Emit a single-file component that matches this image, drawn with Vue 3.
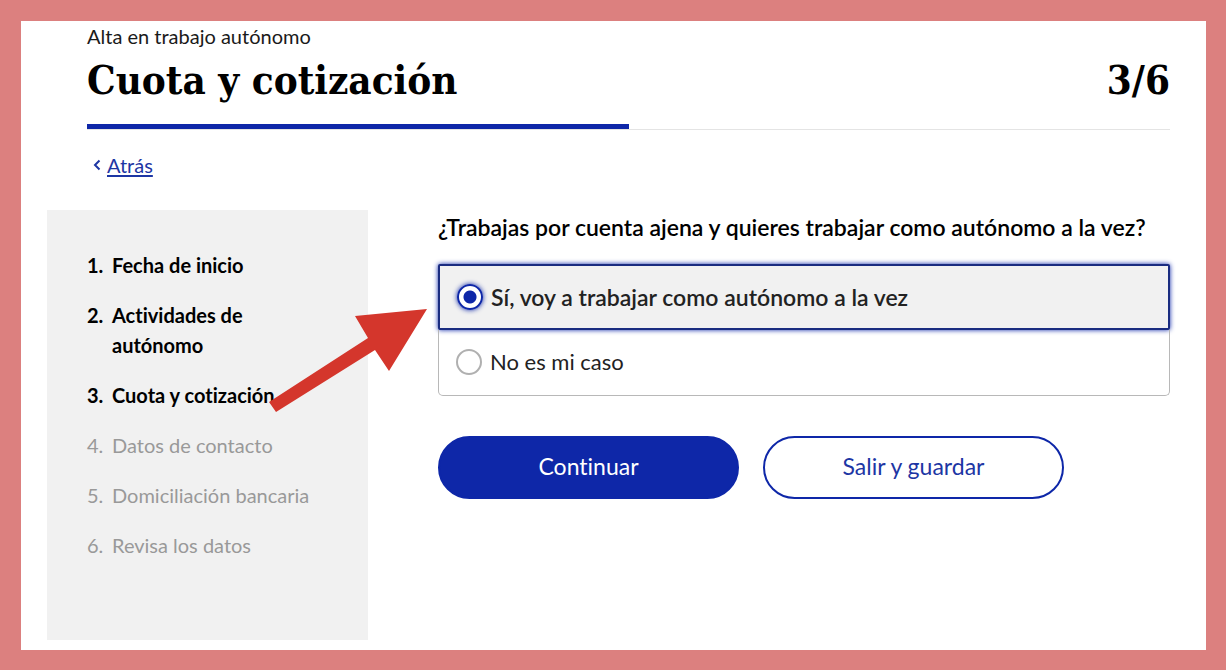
<template>
  <div class="page">
    <header class="header">
      <p class="overline">Alta en trabajo autónomo</p>
      <div class="title-row">
        <h1 class="title">Cuota y cotización</h1>
        <span class="counter">{{ currentStep }}/{{ steps.length }}</span>
      </div>
      <div class="progress">
        <div class="progress-bar" :style="{ width: progress + '%' }"></div>
      </div>
      <nav class="back">
        <svg class="back-icon" viewBox="0 0 8 12" aria-hidden="true">
          <path d="M6.5 1.500 2 6l4.500 4.500" />
        </svg>
        <a href="#" class="back-link">Atrás</a>
      </nav>
    </header>

    <div class="content">
      <aside class="sidebar">
        <ol class="steps">
          <li
            v-for="(step, index) in steps"
            :key="step"
            class="step"
            :class="{ active: index < currentStep }"
          >
            <span>{{ index + 1 }}.</span>
            <span>{{ step }}</span>
          </li>
        </ol>
      </aside>

      <form class="form" @submit.prevent>
        <h2 id="question" class="question">
          ¿Trabajas por cuenta ajena y quieres trabajar como autónomo a la vez?
        </h2>

        <div class="options" role="radiogroup" aria-labelledby="question">
          <label
            v-for="option in options"
            :key="option.value"
            class="option"
            :class="{ selected: selected === option.value }"
          >
            <input
              v-model="selected"
              type="radio"
              name="situation"
              :value="option.value"
              class="radio"
            />
            <span>{{ option.label }}</span>
          </label>

          <!-- Flecha que señala la opción -->
          <svg class="arrow" viewBox="0 0 158 103" aria-hidden="true">
            <polygon points="158,0 86,7 99,29 0,93 7,103 106,41 120,62" />
          </svg>
        </div>

        <div class="actions">
          <button type="submit" class="btn btn-primary">Continuar</button>
          <button type="button" class="btn btn-outline">Salir y guardar</button>
        </div>
      </form>
    </div>
  </div>
</template>

<script setup>
import { ref, computed } from 'vue'

const steps = [
  'Fecha de inicio',
  'Actividades de autónomo',
  'Cuota y cotización',
  'Datos de contacto',
  'Domiciliación bancaria',
  'Revisa los datos'
]

const options = [
  { value: 'yes', label: 'Sí, voy a trabajar como autónomo a la vez' },
  { value: 'no', label: 'No es mi caso' }
]

const currentStep = ref(3)
const selected = ref('yes')

const progress = computed(() => (currentStep.value / steps.length) * 100)
</script>

<style>
body {
  margin: 0;
}
</style>

<style scoped>
.page {
  box-sizing: border-box;
  min-height: 100vh;
  display: flex;
  flex-direction: column;
  border: 20px solid #dc807f;
  border-top-width: 21px;
  border-left-width: 21px;
  background: #ffffff;
  color: #000000;
  font-family: Lato, "Open Sans", sans-serif;
  font-size: 20px;
  font-variant-ligatures: none;
  line-height: 30px;
}

.header {
  padding: 0 36px 0 66px;
}

.overline {
  margin: 0;
  color: #1a1a1a;
}

.title-row {
  display: flex;
  align-items: center;
  justify-content: space-between;
  padding: 3px 0 18px;
}

.title,
.counter {
  margin: 0;
  font-family: "DejaVu Serif Condensed", "DejaVu Serif", serif;
  font-size: 40px;
  font-weight: 700;
  line-height: 52px;
}

.progress {
  border-bottom: 1px solid #e4e4e4;
}

.progress-bar {
  height: 5px;
  background: #0e27a8;
}

.back {
  display: flex;
  align-items: center;
  gap: 6px;
  padding: 20px 0 30px 6px;
}

.back-icon {
  width: 8px;
  height: 12px;
  fill: none;
  stroke: #1d36a4;
  stroke-width: 2;
}

.back-link {
  color: #1d36a4;
  text-underline-offset: 2px;
}

.content {
  flex: 1;
  display: grid;
  grid-template-columns: 321px 1fr;
  column-gap: 70px;
  padding: 0 36px 10px 26px;
}

.sidebar {
  padding: 40px;
  background: #f1f1f1;
}

.steps {
  display: flex;
  flex-direction: column;
  gap: 20px;
  margin: 0;
  padding: 0;
  list-style: none;
}

.step {
  display: grid;
  grid-template-columns: 25px 1fr;
  color: #999999;
}

.step.active {
  color: #000000;
  font-weight: 700;
}

.question {
  margin: 0 0 20px;
  font-size: 23px;
  font-weight: 600;
  line-height: 34px;
}

.options {
  position: relative;
  margin-bottom: 40px;
}

.option {
  display: flex;
  align-items: center;
  gap: 8px;
  box-sizing: border-box;
  height: 66px;
  padding: 0 17px 2px;
  border: 1px solid #b8b8b8;
  border-top: 0;
  border-radius: 0 0 5px 5px;
  color: #222222;
  font-size: 22px;
  cursor: pointer;
}

.option.selected {
  padding: 0 17px;
  border: 2px solid #1a2c80;
  border-radius: 2px;
  background: #f1f1f1;
  box-shadow: 0 0 5px #0e27a8;
  font-size: 23px;
  font-weight: 600;
}

.radio {
  appearance: none;
  box-sizing: border-box;
  flex: none;
  width: 26px;
  height: 26px;
  margin: 0;
  border: 2px solid #b0b0b0;
  border-radius: 50%;
  background: #ffffff;
}

.radio:checked {
  border-color: #0e27a8;
  background: radial-gradient(circle, #0e27a8 6px, #ffffff 7px);
  box-shadow: 0 0 5px #0e27a8;
}

.arrow {
  position: absolute;
  top: 45px;
  left: -169px;
  width: 158px;
  height: 103px;
  fill: #d4362c;
  pointer-events: none;
}

.actions {
  display: flex;
  gap: 24px;
}

.btn {
  width: 301px;
  height: 63px;
  padding: 0 0 3px;
  border: 2px solid #0e27a8;
  border-radius: 32px;
  font-family: inherit;
  font-size: 23px;
  font-variant-ligatures: none;
  cursor: pointer;
}

.btn-primary {
  background: #0e27a8;
  color: #ffffff;
}

.btn-outline {
  background: #ffffff;
  color: #1d36a4;
}
</style>
